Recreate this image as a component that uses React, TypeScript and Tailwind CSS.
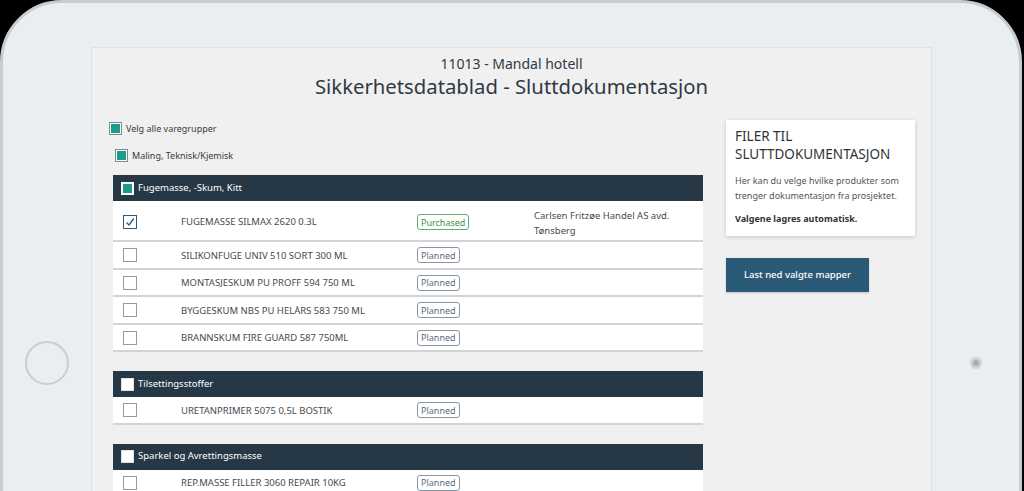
import React from 'react';

type Product = {
    name: string;
    status: 'Purchased' | 'Planned';
    supplier?: string;
    checked?: boolean;
};

type Group = {
    name: string;
    checked: boolean;
    products: Product[];
};

const groups: Group[] = [
    {
        name: 'Fugemasse, -Skum, Kitt',
        checked: true,
        products: [
            { name: 'FUGEMASSE SILMAX 2620 0.3L', status: 'Purchased', supplier: 'Carlsen Fritzøe Handel AS avd. Tønsberg', checked: true },
            { name: 'SILIKONFUGE UNIV 510 SORT 300 ML', status: 'Planned' },
            { name: 'MONTASJESKUM PU PROFF 594 750 ML', status: 'Planned' },
            { name: 'BYGGESKUM NBS PU HELÅRS 583 750 ML', status: 'Planned' },
            { name: 'BRANNSKUM FIRE GUARD 587 750ML', status: 'Planned' },
        ],
    },
    {
        name: 'Tilsettingsstoffer',
        checked: false,
        products: [{ name: 'URETANPRIMER 5075 0,5L BOSTIK', status: 'Planned' }],
    },
    {
        name: 'Sparkel og Avrettingsmasse',
        checked: false,
        products: [{ name: 'REP.MASSE FILLER 3060 REPAIR 10KG', status: 'Planned' }],
    },
];

const TealBox: React.FC<{ className?: string }> = ({ className = '' }) => (
    <span className={`inline-flex w-[13px] h-[13px] shrink-0 border border-[#7f8c8c] bg-white p-px ${className}`}>
        <span className="w-full h-full bg-[#1c9c8a]" />
    </span>
);

const RowCheck: React.FC<{ checked?: boolean }> = ({ checked }) => (
    <span className={`inline-flex items-center justify-center w-[14px] h-[14px] border ${checked ? 'border-[#2c5a78]' : 'border-[#9a9a9a]'} bg-white`}>
        {checked && (
            <svg width="10" height="10" viewBox="0 0 10 10" fill="none">
                <path d="M1.5 5.5 L4 8 L8.8 1.5" stroke="#2c5a78" strokeWidth="1.3" />
            </svg>
        )}
    </span>
);

const Badge: React.FC<{ status: Product['status'] }> = ({ status }) => (
    <span
        className={`inline-flex items-center h-[16px] px-[3px] rounded-[3px] border text-[9px] leading-none ${
            status === 'Purchased' ? 'border-[#5cb26a] text-[#3f8f4c]' : 'border-[#8797a6] text-[#5b6b7a]'
        }`}
    >
        {status}
    </span>
);

const GroupTable: React.FC<{ group: Group }> = ({ group }) => (
    <div className="w-[590px] ml-[4px]">
        <div className="h-[26px] bg-[#263846] flex items-center pl-[8px] gap-[4px]">
            {group.checked ? (
                <TealBox className="border-white" />
            ) : (
                <span className="w-[13px] h-[13px] bg-white border border-[#dfe3e6]" />
            )}
            <span className="text-white text-[9.5px]">{group.name}</span>
        </div>
        {group.products.map((p) => (
            <div
                key={p.name}
                className={`grid grid-cols-[68px_236px_117px_1fr] bg-white border-b-2 border-[#d3d3d3] ${
                    p.supplier ? 'items-start pt-[7px] h-[41px]' : 'items-center pt-[1px] h-[27.5px]'
                }`}
            >
                <div className={`pl-[10px] flex ${p.supplier ? 'pt-[7px]' : ''}`}>
                    <RowCheck checked={p.checked} />
                </div>
                <div className={`text-[9.5px] leading-[15px] text-[#4a4a4a] ${p.supplier ? 'pt-[6px]' : ''}`}>{p.name}</div>
                <div className={`flex ${p.supplier ? 'pt-[6px]' : ''}`}>
                    <Badge status={p.status} />
                </div>
                <div className="text-[9.5px] leading-[15px] text-[#4a4a4a] pr-[20px]">{p.supplier}</div>
            </div>
        ))}
    </div>
);

const App: React.FC = () => {
    return (
        <div className="w-[1024px] h-[491px] bg-black overflow-hidden" style={{ fontFamily: '"Noto Sans", "Open Sans", sans-serif' }}>
            <div className="w-[1022px] h-[720px] rounded-[62px] border-[3px] border-[#c6ccd0] bg-[#e9eef1] pt-[44px] flex">
                {/* left bezel */}
                <div className="w-[88px] shrink-0 flex flex-col items-center pt-[294px]">
                    <div className="w-[44px] h-[44px] rounded-full border-2 border-[#c9cdd0]" />
                </div>

                {/* screen */}
                <div className="w-[841px] shrink-0 bg-[#f0f0f0] border border-[#dde2e5]">
                    <div className="text-center text-[#2f3a44] pt-[6px]">
                        <div className="text-[14px] leading-[19px]">11013 - Mandal hotell</div>
                        <div className="text-[20.3px] leading-[26px]">Sikkerhetsdatablad - Sluttdokumentasjon</div>
                    </div>

                    <div className="flex pl-[17px] pt-[21px]">
                        <div className="w-[595px] shrink-0 pt-[2px]">
                            <label className="flex items-center gap-[4px] h-[13px]">
                                <TealBox />
                                <span className="text-[9px] text-[#3a3a3a]">Velg alle varegrupper</span>
                            </label>
                            <label className="flex items-center gap-[4px] h-[13px] ml-[6px] mt-[14px]">
                                <TealBox />
                                <span className="text-[9px] text-[#3a3a3a]">Maling, Teknisk/Kjemisk</span>
                            </label>
                            <div className="mt-[13px] flex flex-col gap-[19px]">
                                {groups.map((g) => (
                                    <GroupTable key={g.name} group={g} />
                                ))}
                            </div>
                        </div>

                        <div className="ml-[22px] w-[189px]">
                            <div className="bg-white shadow-[0_1px_4px_rgba(0,0,0,0.18)] px-[9px] pt-[7px] pb-[10px] h-[116px]">
                                <h3 className="text-[13.5px] leading-[18px] text-[#2f3338] uppercase">Filer til sluttdokumentasjon</h3>
                                <p className="mt-[10px] text-[9px] leading-[15px] text-[#555]">
                                    Her kan du velge hvilke produkter som trenger dokumentasjon fra prosjektet.
                                </p>
                                <p className="mt-[8px] text-[9px] leading-[15px] font-bold text-[#333]">Valgene lagres automatisk.</p>
                            </div>
                            <button className="mt-[22px] w-[143px] h-[34px] bg-[#2b5978] text-white text-[9.5px] font-medium shadow-[0_1px_2px_rgba(0,0,0,0.2)]">
                                Last ned valgte mapper
                            </button>
                        </div>
                    </div>
                </div>

                {/* right bezel */}
                <div className="flex-1 flex flex-col items-center pt-[310px]">
                    <div className="w-[12px] h-[12px] rounded-full bg-[#cfd3d6] flex items-center justify-center">
                        <div className="w-[6px] h-[6px] rounded-full bg-[#a9adb0]" />
                    </div>
                </div>
            </div>
        </div>
    );
};

export default App;
